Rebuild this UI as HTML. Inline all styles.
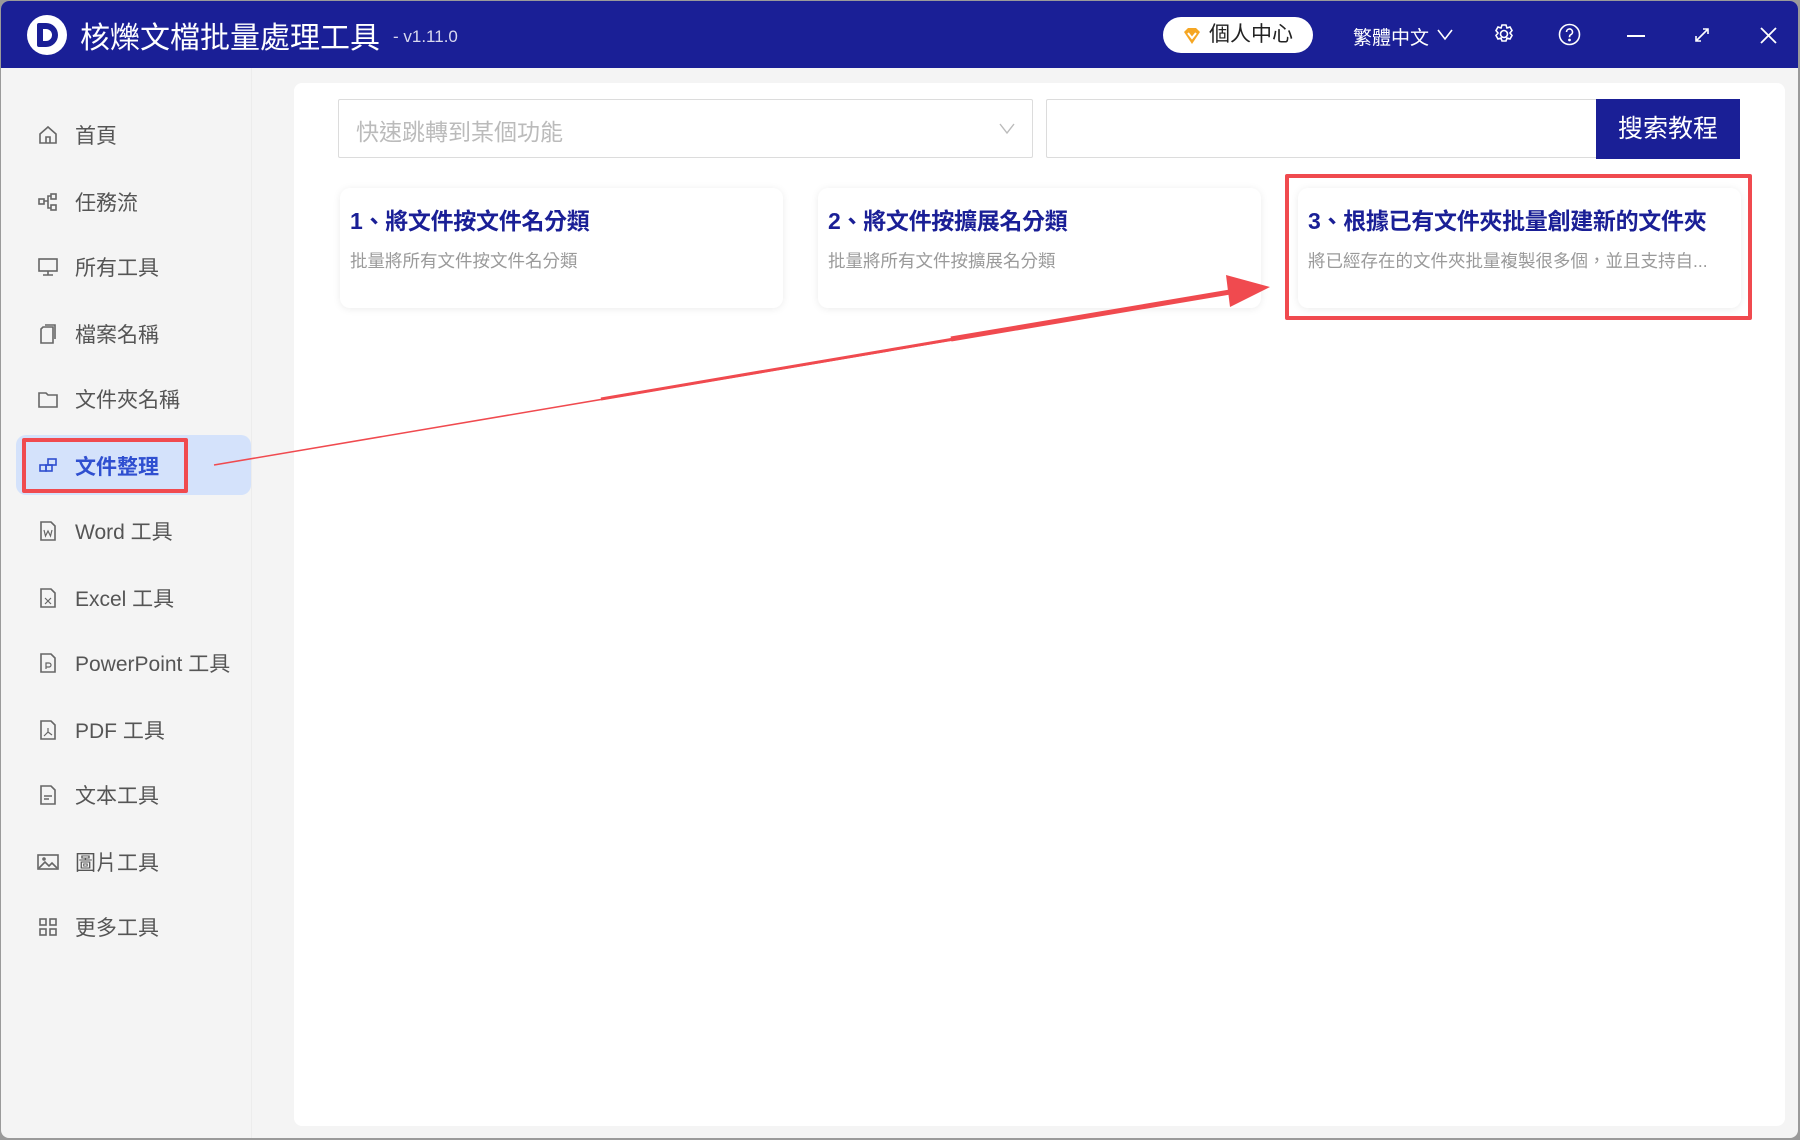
<!DOCTYPE html>
<html><head><meta charset="utf-8"><style>
*{margin:0;padding:0;box-sizing:border-box}
body{width:1800px;height:1140px;overflow:hidden;background:#9a9a9a;font-family:"Liberation Sans","Noto Sans CJK TC",sans-serif;position:relative}
.win{position:absolute;left:1px;top:1px;width:1797px;height:1137px;background:#f4f4f4;border-radius:8px;overflow:hidden}
.top{position:absolute;left:0;top:0;width:100%;height:67px;background:#1a1f96;color:#fff}
.abs{position:absolute}
.side{position:absolute;left:0;top:67px;width:251px;height:1070px;border-right:1px solid #ececec}
.item{position:absolute;left:36px;height:40px;display:flex;align-items:center;font-size:21px;color:#555}
.item svg{width:22px;height:22px;margin-right:16px;stroke:#666;fill:none;stroke-width:1.6}
.main{position:absolute;left:293px;top:82px;width:1491px;height:1043px;background:#fff;border-radius:8px}
.card{position:absolute;top:105px;width:443px;height:120px;background:#fff;border-radius:10px;box-shadow:0 1px 8px rgba(0,0,0,.08)}
.card h3{position:absolute;left:10px;top:14px;font-size:23px;color:#1a1f96;font-weight:bold;white-space:nowrap;letter-spacing:-0.3px}
.card p{position:absolute;left:10px;top:60px;font-size:17.5px;color:#9a9a9a;white-space:nowrap}
</style></head><body>
<div class="win">
<div class="top">
 <div class="abs" style="left:26px;top:14px;width:40px;height:40px;border-radius:50%;background:#fff;"></div>
 <div class="abs" style="left:36px;top:22px;width:21px;height:24px;border:6px solid #1a1f96;border-radius:2px 12px 12px 2px"></div>
 <div class="abs" style="left:79px;top:12px;font-size:30px;">核爍文檔批量處理工具</div>
 <div class="abs" style="left:392px;top:26px;font-size:17px;color:#d8d8ee">- v1.11.0</div>
 <div class="abs" style="left:1162px;top:16px;width:150px;height:36px;background:#fff;border-radius:18px;color:#222;font-size:21px;padding-left:46px;line-height:36px">個人中心</div>
 <svg class="abs" style="left:1181px;top:25px" width="20" height="20" viewBox="0 0 20 20"><path d="M2 6 L6 2 H14 L18 6 L10 18Z" fill="#f5a623"/><path d="M6 7 L10 12 L14 7" stroke="#fff" stroke-width="2" fill="none"/></svg>
 <div class="abs" style="left:1352px;top:22px;font-size:19px">繁體中文</div>
 <svg class="abs" style="left:1436px;top:28px" width="16" height="12" viewBox="0 0 16 12"><path d="M1 1 L8 10 L15 1" stroke="#fff" stroke-width="1.6" fill="none"/></svg>
 <svg class="abs" style="left:1492px;top:22px" width="22" height="22" viewBox="0 0 22 22" fill="none" stroke="#fff" stroke-width="1.6"><circle cx="11" cy="11" r="3.5"/><path d="M9 2h4l1 3 3-1 2 3.5-2 2.5 2 2.5-2 3.5-3-1-1 3h-4l-1-3-3 1-2-3.5 2-2.5-2-2.5 2-3.5 3 1z"/></svg>
 <svg class="abs" style="left:1557px;top:22px" width="23" height="23" viewBox="0 0 23 23" fill="none" stroke="#fff" stroke-width="1.6"><circle cx="11.5" cy="11.5" r="10"/><path d="M8.5 9a3 3 0 1 1 4 2.8c-1 .5-1 1.2-1 2.5"/><circle cx="11.5" cy="17" r=".6" fill="#fff"/></svg>
 <div class="abs" style="left:1626px;top:34px;width:18px;height:2px;background:#fff"></div>
 <svg class="abs" style="left:1693px;top:26px" width="16" height="16" viewBox="0 0 16 16" stroke="#fff" stroke-width="1.6" fill="none"><path d="M2 14 L14 2 M9 2h5v5 M2 9v5h5"/></svg>
 <svg class="abs" style="left:1759px;top:26px" width="17" height="17" viewBox="0 0 17 17" stroke="#fff" stroke-width="1.8"><path d="M1 1L16 16M16 1L1 16"/></svg>
</div>
<div class="side">
 <div class="abs" style="left:15px;top:367px;width:235px;height:60px;background:#d4e2fb;border-radius:10px"></div>
 <div class="abs" style="left:21px;top:370px;width:166px;height:55px;border:4px solid #f04a4f;border-radius:2px"></div>
</div>
<div class="item" style="top:114px"><svg viewBox="0 0 22 22"><path d="M3 10 L11 3 L19 10 V19 H3Z M9 19v-6h4v6"/></svg>首頁</div>
<div class="item" style="top:181px"><svg viewBox="0 0 22 22"><rect x="2" y="8" width="5" height="5"/><rect x="14" y="3" width="5" height="5"/><rect x="14" y="14" width="5" height="5"/><path d="M7 10h4v-5h3M11 10v7h3"/></svg>任務流</div>
<div class="item" style="top:246px"><svg viewBox="0 0 22 22"><rect x="2" y="3" width="18" height="12"/><path d="M11 15v4M6 19h10"/></svg>所有工具</div>
<div class="item" style="top:313px"><svg viewBox="0 0 22 22"><path d="M6 4h10v16H4V6z M8 2h10v14"/></svg>檔案名稱</div>
<div class="item" style="top:378px"><svg viewBox="0 0 22 22"><path d="M2 5h7l2 2h9v12H2z"/></svg>文件夾名稱</div>
<div class="item" style="top:445px;color:#2f4fd0;font-weight:bold"><svg viewBox="0 0 22 22" style="stroke:#2f4fd0"><rect x="3" y="10" width="6" height="6"/><rect x="9" y="10" width="6" height="6"/><rect x="11" y="4" width="8" height="6"/></svg>文件整理</div>
<div class="item" style="top:510px"><svg viewBox="0 0 22 22"><path d="M4 2h10l4 4v14H4z"/><path d="M7 10l1.5 6 2.5-5 2.5 5 1.5-6" stroke-width="1.2"/></svg>Word 工具</div>
<div class="item" style="top:577px"><svg viewBox="0 0 22 22"><path d="M4 2h10l4 4v14H4z"/><path d="M8 11l6 6M14 11l-6 6" stroke-width="1.2"/></svg>Excel 工具</div>
<div class="item" style="top:642px"><svg viewBox="0 0 22 22"><path d="M4 2h10l4 4v14H4z"/><path d="M9 17v-6h3a2 2 0 0 1 0 4H9" stroke-width="1.2"/></svg>PowerPoint 工具</div>
<div class="item" style="top:709px"><svg viewBox="0 0 22 22"><path d="M4 2h10l4 4v14H4z"/><path d="M11 9v4l-4 4M11 13l4 3" stroke-width="1.2"/></svg>PDF 工具</div>
<div class="item" style="top:774px"><svg viewBox="0 0 22 22"><path d="M4 2h10l4 4v14H4z"/><path d="M7 12h8M7 15h5"/></svg>文本工具</div>
<div class="item" style="top:841px"><svg viewBox="0 0 22 22"><rect x="1" y="4" width="20" height="14"/><path d="M2 17l6-6 4 4 3-3 5 5"/><circle cx="7" cy="8" r="1"/></svg>圖片工具</div>
<div class="item" style="top:906px"><svg viewBox="0 0 22 22"><rect x="3" y="3" width="6" height="6"/><rect x="13" y="3" width="6" height="6"/><rect x="3" y="13" width="6" height="6"/><rect x="13" y="13" width="6" height="6"/></svg>更多工具</div>
<div class="main">
 <div class="abs" style="left:44px;top:16px;width:695px;height:59px;border:1px solid #dcdcdc;border-radius:2px;font-size:23px;color:#bbb;padding:13px 0 0 17px">快速跳轉到某個功能</div>
 <svg class="abs" style="left:705px;top:40px" width="16" height="12" viewBox="0 0 16 12"><path d="M1 1L8 10L15 1" stroke="#bbb" stroke-width="1.4" fill="none"/></svg>
 <div class="abs" style="left:752px;top:16px;width:552px;height:59px;border:1px solid #dcdcdc;border-right:none;border-radius:2px"></div>
 <div class="abs" style="left:1302px;top:16px;width:144px;height:60px;background:#1a1f96;color:#fff;font-size:25px;text-align:center;line-height:60px">搜索教程</div>
 <div class="card" style="left:46px"><h3>1、將文件按文件名分類</h3><p>批量將所有文件按文件名分類</p></div>
 <div class="card" style="left:524px"><h3>2、將文件按擴展名分類</h3><p>批量將所有文件按擴展名分類</p></div>
 <div class="card" style="left:1004px"><h3>3、根據已有文件夾批量創建新的文件夾</h3><p>將已經存在的文件夾批量複製很多個，並且支持自...</p></div>
 <div class="abs" style="left:991px;top:91px;width:467px;height:146px;border:4px solid #f04a4f;border-radius:2px"></div>
</div>
<svg class="abs" style="left:0;top:0" width="1800" height="1140" viewBox="0 0 1800 1140">
 <polygon points="1225,274 1269,286 1229,306" fill="#f04a4f"/>
 <path d="M213 464 L1235 291" stroke="#f04a4f" stroke-width="1.5"/>
 <path d="M600 398 L1235 290" stroke="#f04a4f" stroke-width="3"/>
 <path d="M950 338 L1235 290" stroke="#f04a4f" stroke-width="5"/>
</svg>
</div>
</body></html>
